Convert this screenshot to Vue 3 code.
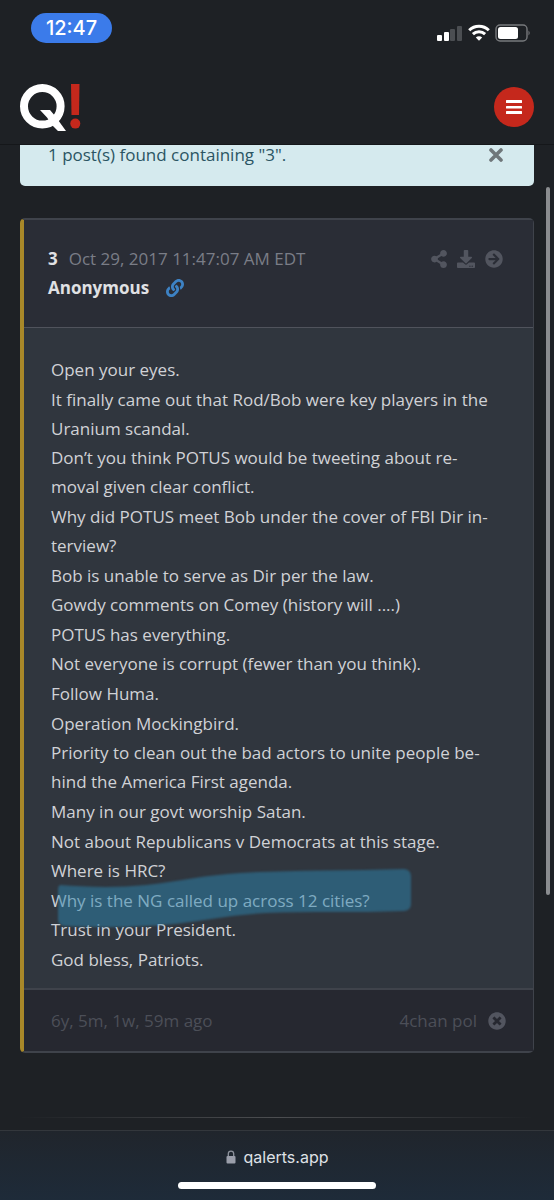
<template>
    <div class="page">
        <div class="status-bar">
            <span class="clock">12:47</span>
            <div class="status-icons">
                <svg width="26" height="18" viewBox="0 0 26 18">
                    <rect x="0" y="11" width="5" height="6" rx="1" fill="#fff" />
                    <rect x="7" y="8" width="5" height="9" rx="1" fill="#fff" />
                    <rect x="13" y="5" width="5" height="12" rx="1" fill="#4b4e52" />
                    <rect x="20" y="2" width="5" height="15" rx="1" fill="#4b4e52" />
                </svg>
                <svg width="22" height="18" viewBox="0 0 22 18" fill="none" stroke="#fff" stroke-width="3">
                    <path d="M1.2 6.2a14 14 0 0 1 19.6 0" />
                    <path d="M4.9 10.2a8.8 8.8 0 0 1 12.2 0" />
                    <path d="M11 16.8L7.8 13.5a4.6 4.6 0 0 1 6.4 0z" fill="#fff" stroke="none" />
                </svg>
                <svg width="36" height="18" viewBox="0 0 36 18">
                    <rect x="1" y="1" width="31" height="16" rx="4" fill="none" stroke="#77797c" stroke-width="1.4" />
                    <rect x="3" y="3" width="20" height="12" rx="2.5" fill="#fff" />
                    <path d="M33.5 6.5q2.4 2.5 0 5z" fill="#77797c" />
                </svg>
            </div>
        </div>

        <header class="navbar">
            <a class="logo" href="#" aria-label="Q!">
                <svg width="62" height="50" viewBox="0 0 62 50">
                    <circle cx="22.3" cy="24.3" r="18.3" fill="none" stroke="#fff" stroke-width="8" />
                    <path d="M20 28H30L35.5 34.5L46 49H38L32.5 43.5L27 35.5Z" fill="#fff" />
                    <path d="M51 2H59.5L59 33H51.5Z" fill="#c5281c" />
                    <circle cx="55.3" cy="41.6" r="5" fill="#c5281c" />
                </svg>
            </a>
            <button class="menu-btn" aria-label="Menu">
                <svg width="16" height="16" viewBox="0 0 16 16" fill="#fff">
                    <rect y="1" width="16" height="3" rx="0.5" />
                    <rect y="7" width="16" height="2.5" rx="0.5" />
                    <rect y="12" width="16" height="3" rx="0.5" />
                </svg>
            </button>
        </header>

        <main class="content">
            <div class="alert">
                <span>{{ resultText }}</span>
                <button class="close-btn" aria-label="Close" @click="closeAlert">
                    <svg width="14" height="14" viewBox="0 0 14 14" stroke="#6f777a" stroke-width="3.6" stroke-linecap="round">
                        <path d="M2 2L12 12M12 2L2 12" />
                    </svg>
                </button>
            </div>

            <article class="card">
                <div class="card-header">
                    <div class="meta">
                        <div class="meta-row">
                            <b class="number">{{ post.id }}</b>
                            <span class="date">{{ post.date }}</span>
                        </div>
                        <div class="meta-row">
                            <b class="author">{{ post.author }}</b>
                            <a class="link" href="#" aria-label="Link">
                                <svg width="18" height="18" viewBox="0 0 512 512" fill="#3d82c4">
                                    <path d="M326.612 185.391c59.747 59.809 58.927 155.698.36 214.59-.11.12-.24.25-.36.37l-67.2 67.2c-59.27 59.27-155.699 59.262-214.96 0-59.27-59.26-59.27-155.7 0-214.96l37.106-37.106c9.84-9.84 26.786-3.3 27.294 10.606.648 17.722 3.826 35.527 9.69 52.721 1.986 5.822.567 12.262-3.783 16.612l-13.087 13.087c-28.026 28.026-28.905 73.66-1.155 101.96 28.024 28.579 74.086 28.749 102.325.51l67.2-67.19c28.191-28.191 28.073-73.757 0-101.83-3.701-3.694-7.429-6.564-10.341-8.569a16.037 16.037 0 0 1-6.947-12.606c-.396-10.567 3.348-21.456 11.698-29.806l21.054-21.055c5.521-5.521 14.182-6.199 20.584-1.731a152.482 152.482 0 0 1 20.522 17.197zM467.547 44.449c-59.261-59.262-155.69-59.27-214.96 0l-67.2 67.2c-.12.12-.25.25-.36.37-58.566 58.892-59.387 154.781.36 214.59a152.454 152.454 0 0 0 20.521 17.196c6.402 4.468 15.064 3.789 20.584-1.731l21.054-21.055c8.35-8.35 12.094-19.239 11.698-29.806a16.037 16.037 0 0 0-6.947-12.606c-2.912-2.005-6.64-4.875-10.341-8.569-28.073-28.073-28.191-73.639 0-101.83l67.2-67.19c28.239-28.239 74.3-28.069 102.325.51 27.75 28.3 26.872 73.934-1.155 101.96l-13.087 13.087c-4.35 4.35-5.769 10.79-3.783 16.612 5.864 17.194 9.042 34.999 9.69 52.721.509 13.906 17.454 20.446 27.294 10.606l37.106-37.106c59.271-59.259 59.271-155.699.001-214.959z" />
                                </svg>
                            </a>
                        </div>
                    </div>
                    <div class="actions">
                        <button aria-label="Share">
                            <svg width="16" height="18" viewBox="0 0 448 512">
                                <path d="M352 320c-22.608 0-43.387 7.819-59.79 20.895l-102.486-64.054a96.551 96.551 0 0 0 0-41.683l102.486-64.054C308.613 184.181 329.392 192 352 192c53.019 0 96-42.981 96-96S405.019 0 352 0s-96 42.981-96 96c0 7.158.79 14.13 2.276 20.841L155.79 180.895C139.387 167.819 118.608 160 96 160c-53.019 0-96 42.981-96 96s42.981 96 96 96c22.608 0 43.387-7.819 59.79-20.895l102.486 64.054A96.301 96.301 0 0 0 256 416c0 53.019 42.981 96 96 96s96-42.981 96-96-42.981-96-96-96z" />
                            </svg>
                        </button>
                        <button aria-label="Download">
                            <svg width="18" height="18" viewBox="0 0 512 512">
                                <path d="M216 0h80c13.3 0 24 10.7 24 24v168h87.7c17.8 0 26.7 21.5 14.1 34.1L269.7 378.3c-7.5 7.5-19.8 7.5-27.3 0L90.1 226.1c-12.6-12.6-3.7-34.1 14.1-34.1H192V24c0-13.3 10.7-24 24-24zm296 376v112c0 13.3-10.7 24-24 24H24c-13.3 0-24-10.7-24-24V376c0-13.3 10.7-24 24-24h146.7l49 49c20.1 20.1 52.5 20.1 72.6 0l49-49H488c13.3 0 24 10.7 24 24zm-124 88c0-11-9-20-20-20s-20 9-20 20 9 20 20 20 20-9 20-20zm64 0c0-11-9-20-20-20s-20 9-20 20 9 20 20 20 20-9 20-20z" />
                            </svg>
                        </button>
                        <button aria-label="Open">
                            <svg width="18" height="18" viewBox="0 0 512 512">
                                <path d="M256 8c137 0 248 111 248 248S393 504 256 504 8 393 8 256 119 8 256 8zm-28.9 143.6l75.5 72.4H120c-13.3 0-24 10.7-24 24v16c0 13.3 10.7 24 24 24h182.6l-75.5 72.4c-9.7 9.3-9.9 24.8-.4 34.3l11 10.9c9.4 9.4 24.6 9.4 33.9 0L404.3 273c9.4-9.4 9.4-24.6 0-33.9L271.6 106.3c-9.4-9.4-24.6-9.4-33.9 0l-11 10.9c-9.5 9.6-9.3 25.1.4 34.4z" />
                            </svg>
                        </button>
                    </div>
                </div>

                <div class="card-body">
                    <p v-for="(line, index) in post.lines" :key="index" :class="{ marked: index === markedLine }">
                        {{ line }}
                        <svg v-if="index === markedLine" class="marker" width="360" height="64" viewBox="0 0 360 64">
                            <path d="M4 17C30 19 60 20 90 17C125 13 150 7 184 5C230 2 290 3 348 1Q355 2 355 8V36Q355 42 348 43C300 45 250 43 210 45C160 48 130 57 90 58C60 60 30 59 8 58Q2 57 2 52V21Q2 18 4 17Z" />
                        </svg>
                    </p>
                </div>

                <div class="card-footer">
                    <span>{{ post.age }}</span>
                    <div class="source">
                        <span>{{ post.source }}</span>
                        <button aria-label="Remove">
                            <svg width="18" height="18" viewBox="0 0 512 512">
                                <path d="M256 8C119 8 8 119 8 256s111 248 248 248 248-111 248-248S393 8 256 8zm121.6 313.1c4.7 4.7 4.7 12.3 0 17L338 377.6c-4.7 4.7-12.3 4.7-17 0L256 312l-65.1 65.6c-4.7 4.7-12.3 4.7-17 0L134.4 338c-4.7-4.7-4.7-12.3 0-17l65.6-65-65.6-65.1c-4.7-4.7-4.7-12.3 0-17l39.6-39.6c4.7-4.7 12.3-4.7 17 0l65 65.7 65.1-65.6c4.7-4.7 12.3-4.7 17 0l39.6 39.6c4.7 4.7 4.7 12.3 0 17L312 256z" />
                            </svg>
                        </button>
                    </div>
                </div>
            </article>

            <hr class="divider" />
        </main>

        <footer class="browser-bar">
            <div class="address">
                <svg width="10" height="14" viewBox="0 0 10 14">
                    <path d="M2.3 6V3.8a2.7 2.7 0 0 1 5.4 0V6" fill="none" stroke="#8e939d" stroke-width="1.3" />
                    <rect x="0.5" y="6" width="9" height="7.5" rx="1" fill="#9a9eaa" />
                </svg>
                <span>qalerts.app</span>
            </div>
            <div class="home-indicator"></div>
        </footer>

        <div class="scroll-thumb"></div>
    </div>
</template>


<script setup>
import { ref } from 'vue';

const resultText = ref('1 post(s) found containing "3".');

// 帖子数据，\u00AD 为软连字符
const post = ref({
    id: 3,
    date: 'Oct 29, 2017 11:47:07 AM EDT',
    author: 'Anonymous',
    age: '6y, 5m, 1w, 59m ago',
    source: '4chan pol',
    lines: [
        'Open your eyes.',
        'It finally came out that Rod/Bob were key players in the Uranium scandal.',
        'Don’t you think POTUS would be tweeting about re\u00ADmoval given clear conflict.',
        'Why did POTUS meet Bob under the cover of FBI Dir in\u00ADterview?',
        'Bob is unable to serve as Dir per the law.',
        'Gowdy comments on Comey (history will ....)',
        'POTUS has everything.',
        'Not everyone is corrupt (fewer than you think).',
        'Follow Huma.',
        'Operation Mockingbird.',
        'Priority to clean out the bad actors to unite people be\u00ADhind the America First agenda.',
        'Many in our govt worship Satan.',
        'Not about Republicans v Democrats at this stage.',
        'Where is HRC?',
        'Why is the NG called up across 12 cities?',
        'Trust in your President.',
        'God bless, Patriots.',
    ],
});

// 高亮的行
const markedLine = ref(14);

// 关闭提示
function closeAlert() {
    console.log('关闭提示');
}
</script>


<style>
body {
    background-color: #1e2125;
}
</style>

<style scoped>
.page {
    position: relative;
    display: flex;
    flex-direction: column;
    min-height: 100vh;
    background-color: #1e2125;
    font-family: "Open Sans", "Noto Sans", sans-serif;
    font-size: 17px;
    color: #d0d2d6;
}

svg {
    display: block;
}

button {
    padding: 0;
    border: none;
    background: none;
    cursor: pointer;
}

.status-bar {
    display: flex;
    justify-content: space-between;
    align-items: flex-start;
    padding: 13px 23px 0 31px;
    height: 56px;
}

.clock {
    width: 81px;
    border-radius: 15px;
    background-color: #3b7bea;
    color: #fff;
    font-family: Inter, sans-serif;
    font-size: 20px;
    font-weight: 500;
    line-height: 30px;
    text-align: center;
}

.status-icons {
    display: flex;
    gap: 5px;
    padding-top: 11px;
}

.navbar {
    display: flex;
    justify-content: space-between;
    align-items: center;
    height: 75px;
    padding: 0 20px;
    border-bottom: 1px solid #15171a;
}

.menu-btn {
    display: flex;
    justify-content: center;
    align-items: center;
    width: 40px;
    height: 40px;
    border-radius: 50%;
    background-color: #c5281c;
}

.content {
    display: flex;
    flex: 1;
    flex-direction: column;
    padding: 0 20px;
}

.alert {
    display: flex;
    justify-content: space-between;
    padding: 0 31px 21px 28px;
    border-radius: 0 0 5px 5px;
    background-color: #d5eaee;
    color: #2b5563;
    line-height: 20px;
}

.card {
    display: flex;
    flex: 1;
    flex-direction: column;
    margin-top: 32px;
    border: 2px solid #3f434b;
    border-left: 4px solid #a88829;
    border-right-width: 1px;
    border-radius: 5px;
    background-color: #30363e;
}

.card-header {
    display: flex;
    justify-content: space-between;
    align-items: flex-start;
    padding: 24px 30px 25px 24px;
    border-bottom: 1px solid #50535c;
    background-color: #2a2d36;
}

.meta-row {
    display: flex;
    align-items: center;
    gap: 11px;
    line-height: 29px;
}

.number,
.author {
    color: #e0e1e4;
}

.author {
    margin-right: 6px;
}

.date {
    color: #7a7d87;
}

.actions {
    display: flex;
    align-items: center;
    gap: 10px;
    height: 29px;
    fill: #52555f;
}

.card-body {
    display: flex;
    flex: 1;
    flex-direction: column;
    justify-content: space-between;
    padding: 27px 36px 14px 27px;
}

.card-body p {
    margin: 0;
    line-height: 29px;
}

.card-body .marked {
    position: relative;
}

.marker {
    position: absolute;
    top: -18px;
    left: 5px;
    fill: rgba(44, 132, 174, 0.5);
    filter: blur(1px);
}

.card-footer {
    display: flex;
    justify-content: space-between;
    padding: 16px 27px;
    border-top: 2px solid #3f434b;
    background-color: #262830;
    color: #4c4f58;
    line-height: 29px;
}

.source {
    display: flex;
    align-items: center;
    gap: 11px;
    fill: #52555f;
}

.divider {
    width: 100%;
    height: 1px;
    margin: 64px 0 12px;
    border: none;
    background: linear-gradient(to right, transparent, #4c4e51, transparent);
}

.browser-bar {
    display: flex;
    flex-direction: column;
    align-items: center;
    gap: 14px;
    padding: 15px 0 11px;
    border-top: 1px solid #33373c;
    background: linear-gradient(#20252c, #1e2b39);
}

.address {
    display: flex;
    align-items: center;
    gap: 8px;
    color: #dfe1e6;
    font-family: Inter, sans-serif;
    font-size: 16px;
    line-height: 22px;
}

.home-indicator {
    width: 198px;
    height: 7px;
    border-radius: 4px;
    background-color: #fff;
}

.scroll-thumb {
    position: absolute;
    top: 187px;
    right: 4px;
    width: 4px;
    height: 708px;
    border-radius: 2px;
    background-color: #8b8d90;
}
</style>
